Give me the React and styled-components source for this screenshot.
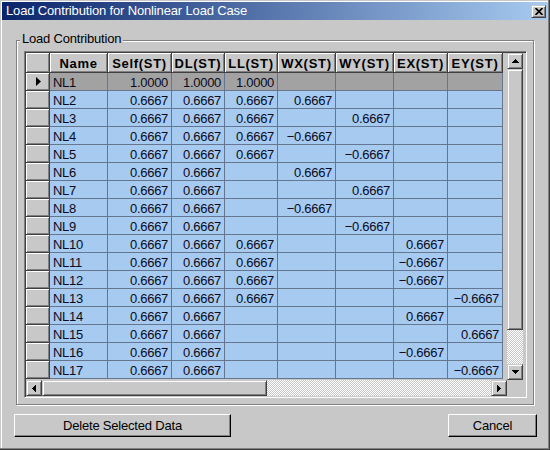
import React from 'react';
import styled, { createGlobalStyle, css } from 'styled-components';

const FACE = '#c8c8c8';
const SHADOW = '#808080';
const DARK = '#404040';
const GRIDLINE = '#66768e';
const ROW_BLUE = '#a6caf0';
const ROW_SEL = '#a2a2a2';
const FONT = `"Liberation Sans", Arial, sans-serif`;

const GlobalStyle = createGlobalStyle`
  html, body { margin: 0; padding: 0; background: ${FACE}; }
  body { font-family: ${FONT}; font-size: 13px; color: #000; }
  * { box-sizing: border-box; }
`;

const raised = css`
  border: 1px solid;
  border-color: ${FACE} ${DARK} ${DARK} ${FACE};
  box-shadow: inset 1px 1px 0 #fff, inset -1px -1px 0 ${SHADOW};
  background: ${FACE};
`;

const Window = styled.div`
  width: 550px;
  height: 450px;
  padding: 2px 3px 3px 2px;
  background: ${FACE};
  box-shadow: inset -1px -1px 0 ${DARK}, inset -2px -2px 0 ${SHADOW},
    inset 1px 1px 0 ${FACE}, inset 2px 2px 0 #fff;
  display: flex;
  flex-direction: column;
`;

const TitleBar = styled.div`
  height: 18px;
  display: flex;
  align-items: flex-start;
  justify-content: space-between;
  padding: 2px 1px 0 4px;
  background: linear-gradient(to right, #0a246a, #a6caf0);
  color: #fff;
  line-height: 14px;
  letter-spacing: -0.15px;
  white-space: nowrap;
`;

const CloseButton = styled.div`
  ${raised};
  width: 15px;
  height: 13px;
  margin-top: 1px;
  display: grid;
  place-items: center;
`;

const Body = styled.div`
  flex: 1;
  display: flex;
  flex-direction: column;
  padding: 20px 10px 0 12px;
`;

const Group = styled.div`
  position: relative;
  margin: 0 3px 0 2px;
  padding: 10px 6px 6px 7px;
  border: 1px solid ${SHADOW};
  box-shadow: inset 1px 1px 0 #fff, 1px 1px 0 #fff;
`;

const Caption = styled.span`
  position: absolute;
  top: -9px;
  left: 3px;
  padding: 0 2px;
  line-height: 14px;
  letter-spacing: -0.2px;
  background: ${FACE};
`;

const GridFrame = styled.div`
  width: 503px;
  height: 347px;
  border: 1px solid;
  border-color: ${SHADOW} #fff #fff ${SHADOW};
  box-shadow: inset 1px 1px 0 ${DARK}, inset -1px -1px 0 ${FACE};
  padding: 1px;
  background: ${FACE};
  display: grid;
  grid-template-columns: 481px 16px;
  grid-template-rows: 327px 16px;
`;

const DataArea = styled.div`
  overflow: hidden;
  background: ${FACE};
`;

const COLS = [24, 58, 64, 53, 53, 58, 58, 54, 55];

const Row = styled.div`
  display: grid;
  grid-template-columns: ${COLS.map((c) => `${c}px`).join(' ')};
  height: ${(p) => (p.$header ? 20 : 18)}px;
`;

const HeadCell = styled.div`
  border-right: 1px solid ${DARK};
  border-bottom: 1px solid ${DARK};
  box-shadow: inset 1px 1px 0 #fff, inset -1px -1px 0 ${SHADOW};
  background: ${FACE};
  font-weight: bold;
  letter-spacing: 0.7px;
  text-align: center;
  padding-top: 3px;
  line-height: 15px;
  white-space: nowrap;
  overflow: hidden;
`;

const RowHead = styled.div`
  border-right: 1px solid ${DARK};
  border-bottom: 1px solid ${DARK};
  box-shadow: inset 1px 1px 0 #fff, inset -1px -1px 0 ${SHADOW};
  background: ${FACE};
  display: flex;
  align-items: center;
  justify-content: center;
  padding-left: 1px;
`;

const Cell = styled.div`
  border-right: 1px solid ${GRIDLINE};
  border-bottom: 1px solid ${GRIDLINE};
  background: ${(p) => (p.$selected ? ROW_SEL : ROW_BLUE)};
  text-align: ${(p) => (p.$left ? 'left' : 'right')};
  padding: 2px 3px 0 3px;
  line-height: 15px;
  letter-spacing: -0.3px;
  white-space: nowrap;
  overflow: hidden;
  color: #0a0a1e;
`;

const VScroll = styled.div`
  display: flex;
  flex-direction: column;
`;

const HScroll = styled.div`
  display: flex;
`;

const ArrowButton = styled.div`
  ${raised};
  flex: 0 0 16px;
  width: 16px;
  height: 16px;
  display: grid;
  place-items: center;
`;

const Thumb = styled.div`
  ${raised};
  flex: 0 0 ${(p) => p.$size}px;
`;

const Track = styled.div`
  flex: 1;
  background: repeating-conic-gradient(#fff 0 25%, ${FACE} 0 50%) 0 0 / 2px 2px;
`;

const Corner = styled.div`
  background: ${FACE};
`;

const ButtonRow = styled.div`
  display: flex;
  justify-content: space-between;
  margin-top: 9px;
`;

const PushButton = styled.button`
  width: ${(p) => p.$w}px;
  height: 23px;
  padding: 0;
  font-family: ${FONT};
  font-size: 13px;
  letter-spacing: -0.2px;
  color: #000;
  background: ${FACE};
  border: 1px solid;
  border-color: #fff #000 #000 #fff;
  box-shadow: inset -1px -1px 0 ${SHADOW};
  border-radius: 0;
`;

const Arrow = ({ dir }) => {
  const paths = {
    up: 'M3.5 0 L7 4 L0 4 Z',
    down: 'M0 0 L7 0 L3.5 4 Z',
    left: 'M4 0 L4 7 L0 3.5 Z',
    right: 'M0 0 L4 3.5 L0 7 Z',
  };
  const vertical = dir === 'up' || dir === 'down';
  return (
    <svg
      width={vertical ? 7 : 4}
      height={vertical ? 4 : 7}
      viewBox={vertical ? '0 0 7 4' : '0 0 4 7'}
      shapeRendering="crispEdges"
    >
      <path d={paths[dir]} fill="#000" />
    </svg>
  );
};

const Pointer = () => (
  <svg width="5" height="9" viewBox="0 0 5 9">
    <path d="M0 0 L5 4.5 L0 9 Z" fill="#000" />
  </svg>
);

const CloseGlyph = () => (
  <svg width="8" height="7" viewBox="0 0 8 7">
    <path d="M0.5 0 L7.5 7 M7.5 0 L0.5 7" stroke="#000" strokeWidth="1.7" />
  </svg>
);

const COLUMNS = ['Self(ST)', 'DL(ST)', 'LL(ST)', 'WX(ST)', 'WY(ST)', 'EX(ST)', 'EY(ST)'];
const P = '0.6667';
const N = '\u22120.6667';
const ROWS = [
  ['NL1', '1.0000', '1.0000', '1.0000', '', '', '', ''],
  ['NL2', P, P, P, P, '', '', ''],
  ['NL3', P, P, P, '', P, '', ''],
  ['NL4', P, P, P, N, '', '', ''],
  ['NL5', P, P, P, '', N, '', ''],
  ['NL6', P, P, '', P, '', '', ''],
  ['NL7', P, P, '', '', P, '', ''],
  ['NL8', P, P, '', N, '', '', ''],
  ['NL9', P, P, '', '', N, '', ''],
  ['NL10', P, P, P, '', '', P, ''],
  ['NL11', P, P, P, '', '', N, ''],
  ['NL12', P, P, P, '', '', N, ''],
  ['NL13', P, P, P, '', '', '', N],
  ['NL14', P, P, '', '', '', P, ''],
  ['NL15', P, P, '', '', '', '', P],
  ['NL16', P, P, '', '', '', N, ''],
  ['NL17', P, P, '', '', '', '', N],
];

export default function App() {
  return (
    <>
      <GlobalStyle />
      <Window>
        <TitleBar>
          <span>Load Contribution for Nonlinear Load Case</span>
          <CloseButton>
            <CloseGlyph />
          </CloseButton>
        </TitleBar>
        <Body>
          <Group>
            <Caption>Load Contribution</Caption>
            <GridFrame>
              <DataArea>
                <Row $header>
                  <HeadCell />
                  <HeadCell>Name</HeadCell>
                  {COLUMNS.map((c) => (
                    <HeadCell key={c}>{c}</HeadCell>
                  ))}
                </Row>
                {ROWS.map((r, i) => (
                  <Row key={r[0]}>
                    <RowHead>{i === 0 && <Pointer />}</RowHead>
                    {r.map((v, j) => (
                      <Cell key={j} $left={j === 0} $selected={i === 0}>
                        {v}
                      </Cell>
                    ))}
                  </Row>
                ))}
              </DataArea>
              <VScroll>
                <ArrowButton>
                  <Arrow dir="up" />
                </ArrowButton>
                <Thumb $size={261} />
                <Track />
                <ArrowButton>
                  <Arrow dir="down" />
                </ArrowButton>
              </VScroll>
              <HScroll>
                <ArrowButton>
                  <Arrow dir="left" />
                </ArrowButton>
                <Thumb $size={225} />
                <Track />
                <ArrowButton>
                  <Arrow dir="right" />
                </ArrowButton>
              </HScroll>
              <Corner />
            </GridFrame>
          </Group>
          <ButtonRow>
            <PushButton $w={217}>Delete Selected Data</PushButton>
            <PushButton $w={89}>Cancel</PushButton>
          </ButtonRow>
        </Body>
      </Window>
    </>
  );
}
